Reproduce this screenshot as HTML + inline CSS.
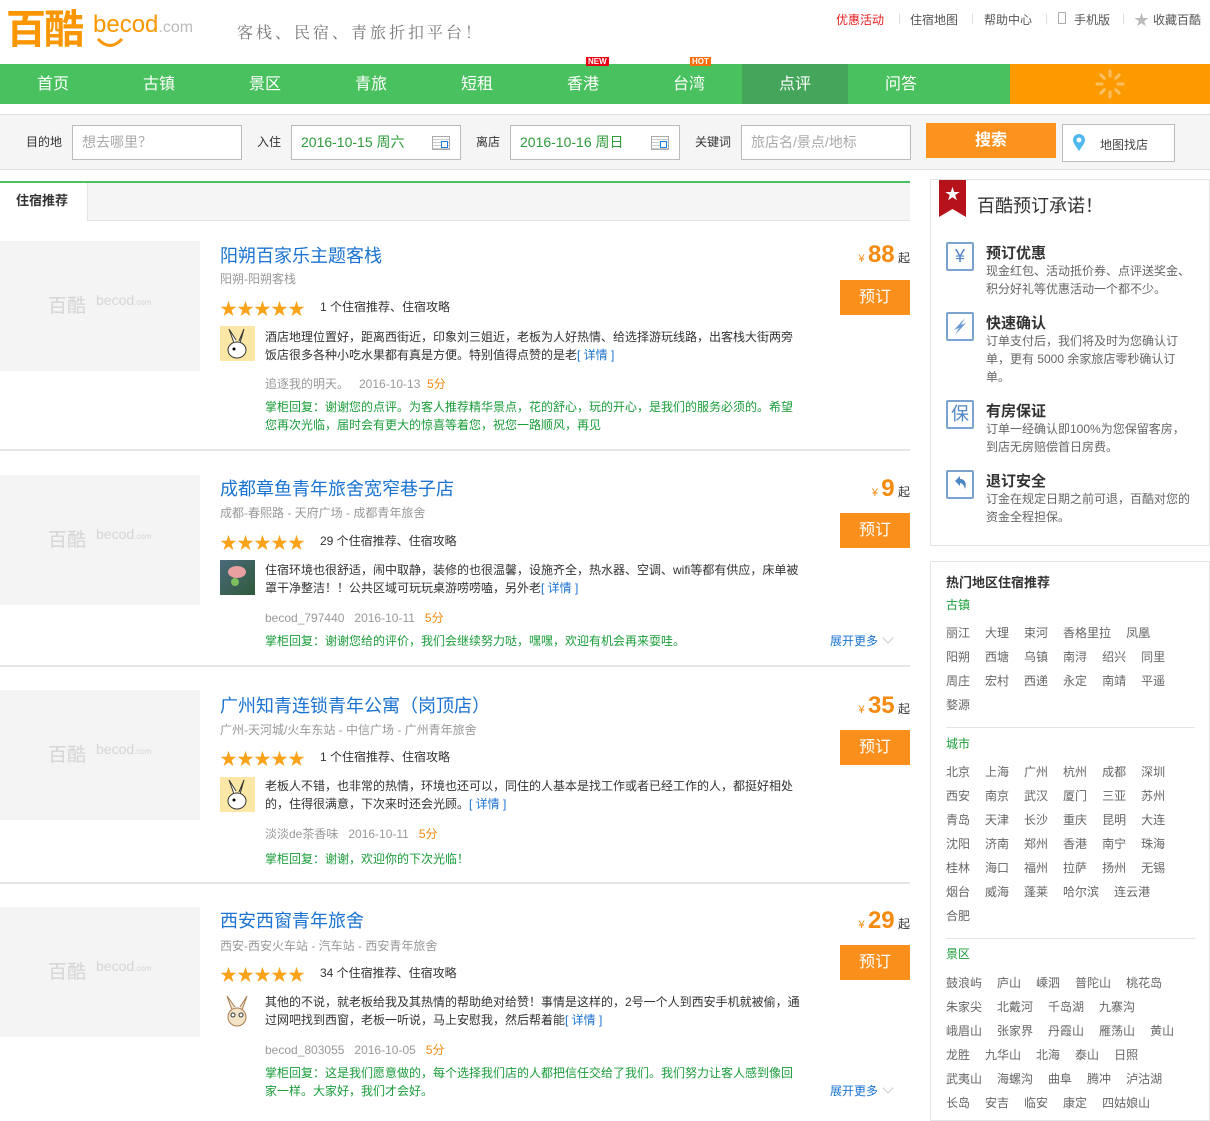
<!DOCTYPE html>
<html><head><meta charset="utf-8"><style>
*{margin:0;padding:0;box-sizing:border-box}
body{width:1210px;height:1100px;overflow:hidden;background:#fff;font-family:"Liberation Sans","Noto Sans CJK SC",sans-serif;font-size:12px;color:#333;position:relative}
.a{position:absolute;white-space:nowrap}
.nav{position:absolute;top:64px;left:0;width:1210px;height:40px;background:#49c15e}
.nav span{position:absolute;top:0;width:106px;height:40px;line-height:42px;text-align:center;color:#fff;font-size:16px}
.tag{position:absolute;font-size:8px;color:#fff;line-height:9px;padding:0 2px;font-weight:bold}
.sb{position:absolute;top:114px;left:0;width:1210px;height:56px;background:#f5f5f5;border-top:1px solid #ddd;border-bottom:1px solid #ddd}
.inp{position:absolute;top:10px;height:35px;background:#fff;border:1px solid #bbb;line-height:33px;padding-left:9px;font-size:14px;color:#aaa}
.lbl{position:absolute;top:18px;font-size:12px;color:#333}
.cal{position:absolute;right:10px;top:10px;width:18px;height:14px;border:1px solid #aaa;background:repeating-linear-gradient(#fff 0 2px,#ccc 2px 3px)}
.cal:after{content:"";position:absolute;right:1px;bottom:1px;width:5px;height:5px;border:1px solid #1a7de0;background:#fff}
.h{position:absolute;left:0;width:910px}
.img{position:absolute;left:0;top:0;width:200px;height:130px;background:#f4f4f4}
.img b{position:absolute;left:48px;top:50px;font-size:19px;color:#d5d5d5;font-weight:normal}
.img i{position:absolute;left:96px;top:51px;font-size:14px;color:#d5d5d5;font-style:normal}
.tt{position:absolute;left:220px;font-size:18px;color:#1a73d0;white-space:nowrap}
.sub{position:absolute;left:220px;color:#999;white-space:nowrap}
.st{position:absolute;left:220px;color:#f9a21a;font-size:17px;letter-spacing:0;white-space:nowrap}
.cnt{position:absolute;left:320px;color:#333;white-space:nowrap}
.av{position:absolute;left:220px;width:35px;height:35px}
.rv{position:absolute;left:265px;width:530px;line-height:18px;color:#333}
.rv a{color:#1a73d0;text-decoration:none}
.au{position:absolute;left:265px;color:#999;white-space:nowrap}
.au em{color:#f58a0f;font-style:normal}
.rp{position:absolute;left:265px;width:530px;line-height:18px;color:#1a9c3a}
.pr{position:absolute;right:0;color:#333;white-space:nowrap}
.pr span{color:#f58a0f;font-size:11px}
.pr b{color:#f58a0f;font-size:24px;font-weight:bold}
.bk{position:absolute;right:0;width:70px;height:35px;background:#fa8f1c;color:#fff;font-size:16px;text-align:center;line-height:35px}
.more{position:absolute;left:830px;color:#1a73d0;white-space:nowrap}
.more:after{content:"";display:inline-block;width:7px;height:7px;border-right:1px solid #ccc;border-bottom:1px solid #ccc;transform:rotate(45deg);margin-left:6px;position:relative;top:-3px}
.sep{position:absolute;left:0;width:910px;height:2px;background:#e5e5e5}
.box{position:absolute;left:930px;width:280px;border:1px solid #e5e5e5}
.pi{position:absolute;left:15px;width:28px;height:29px;border:2px solid #7aa3cf;border-radius:2px;color:#4f86c6;text-align:center;line-height:25px;font-size:18px}
.pt{position:absolute;left:55px;font-size:15px;font-weight:bold;color:#333}
.pd{position:absolute;left:55px;width:210px;line-height:18px;color:#666}
.g{color:#1a9c3a;font-size:12px;position:absolute;left:15px}
.row{position:absolute;left:15px;color:#666;white-space:nowrap;font-size:0}
.row span{display:inline-block;margin-right:15px;font-size:12px}
.hr{position:absolute;left:15px;width:249px;height:1px;background:#e5e5e5}
</style></head><body>

<div class="a" style="left:6px;top:8px;font-size:40px;color:#fb9600;font-weight:bold;letter-spacing:-2px;line-height:44px">百酷</div>
<div class="a" style="left:93px;top:10px;font-size:24px;color:#fb9600;line-height:30px">becod<span style="font-size:16px;color:#bbb">.com</span></div>
<svg class="a" style="left:95px;top:36px" width="30" height="14"><path d="M3 3 Q15 16 27 3" stroke="#fb9600" stroke-width="3" fill="none"/></svg>
<div class="a" style="left:237px;top:20px;font-size:16px;color:#777;letter-spacing:3px;font-family:'Liberation Serif','Noto Serif CJK SC',serif">客栈、民宿、青旅折扣平台！</div>

<div class="a" style="left:836px;top:11px;color:#e51c1c">优惠活动</div>
<div class="a" style="left:898px;top:11px;color:#ddd">|</div>
<div class="a" style="left:910px;top:11px;color:#555">住宿地图</div>
<div class="a" style="left:971px;top:11px;color:#ddd">|</div>
<div class="a" style="left:984px;top:11px;color:#555">帮助中心</div>
<div class="a" style="left:1045px;top:11px;color:#ddd">|</div>
<div class="a" style="left:1058px;top:12px;width:8px;height:12px;border:1px solid #aaa;border-radius:1px"></div>
<div class="a" style="left:1074px;top:11px;color:#555">手机版</div>
<div class="a" style="left:1122px;top:11px;color:#ddd">|</div>
<div class="a" style="left:1134px;top:9px;color:#bbb;font-size:15px">★</div>
<div class="a" style="left:1153px;top:11px;color:#555">收藏百酷</div>

<div class="nav">
<span style="left:0">首页</span><span style="left:106px">古镇</span><span style="left:212px">景区</span><span style="left:318px">青旅</span><span style="left:424px">短租</span><span style="left:530px">香港</span><span style="left:636px">台湾</span><span style="left:742px;background:#45a55a">点评</span><span style="left:848px">问答</span>
<div style="position:absolute;left:1010px;top:0;width:200px;height:40px;background:#fc9a00"></div>
<svg style="position:absolute;left:1094px;top:4px" width="32" height="32" viewBox="-16 -16 32 32"><g stroke="#fcc060" stroke-width="3" stroke-linecap="round"><line x1="0" y1="-8" x2="0" y2="-13"/><line x1="5.7" y1="-5.7" x2="9.2" y2="-9.2"/><line x1="8" y1="0" x2="13" y2="0"/><line x1="5.7" y1="5.7" x2="9.2" y2="9.2"/><line x1="0" y1="8" x2="0" y2="13"/><line x1="-5.7" y1="5.7" x2="-9.2" y2="9.2"/><line x1="-8" y1="0" x2="-13" y2="0"/><line x1="-5.7" y1="-5.7" x2="-9.2" y2="-9.2"/></g></svg>
</div>
<div class="tag" style="left:586px;top:57px;background:#e60012">NEW</div>
<div class="tag" style="left:690px;top:57px;background:#fb6c0b">HOT</div>

<div class="sb">
<div class="lbl" style="left:26px">目的地</div>
<div class="inp" style="left:72px;width:170px">想去哪里？</div>
<div class="lbl" style="left:257px">入住</div>
<div class="inp" style="left:291px;width:170px;color:#2d9b3a">2016-10-15 周六<div class="cal"></div></div>
<div class="lbl" style="left:476px">离店</div>
<div class="inp" style="left:510px;width:170px;color:#2d9b3a">2016-10-16 周日<div class="cal"></div></div>
<div class="lbl" style="left:695px">关键词</div>
<div class="inp" style="left:741px;width:170px">旅店名/景点/地标</div>
<div style="position:absolute;left:926px;top:8px;width:130px;height:35px;background:#fc931e;color:#fff;font-size:16px;font-weight:bold;text-align:center;line-height:35px">搜索</div>
<div style="position:absolute;left:1062px;top:9px;width:113px;height:38px;border:1px solid #bbb;background:#fff">
<svg style="position:absolute;left:9px;top:8px" width="14" height="19"><path d="M7 18 C2 11 1 9 1 7 A6 6 0 0 1 13 7 C13 9 12 11 7 18Z" fill="#4fb8ee"/><circle cx="7" cy="7" r="2.5" fill="#fff"/></svg>
<div style="position:absolute;left:37px;top:11px;color:#444">地图找店</div></div>
</div>

<div class="a" style="left:0;top:181px;width:910px;height:40px;background:#f5f5f5;border-top:2px solid #49c15e;border-bottom:1px solid #e5e5e5"></div>
<div class="a" style="left:0;top:183px;width:88px;height:38px;background:#fff;border-right:1px solid #e5e5e5;font-weight:bold;font-size:13px;line-height:36px;padding-left:16px">住宿推荐</div>

<!-- hotel 1 -->
<div class="h" style="top:241px;height:210px">
<div class="img"><b>百酷</b><i>becod<small style="font-size:8px">.com</small></i></div>
<div class="tt" style="top:1px">阳朔百家乐主题客栈</div>
<div class="sub" style="top:29px">阳朔-阳朔客栈</div>
<div class="st" style="top:54px">★★★★★</div>
<div class="cnt" style="top:57px">1 个住宿推荐、住宿攻略</div>
<div class="av" style="top:85px;background:#fde7a6"><svg width="35" height="35"><ellipse cx="17" cy="24" rx="9" ry="8" fill="#fff" stroke="#333"/><path d="M14 17 L9 3 L16 14 M20 17 L24 3 L19 15" stroke="#333" fill="#fff"/><circle cx="14" cy="23" r="1.5"/></svg></div>
<div class="rv" style="top:87px">酒店地理位置好，距离西街近，印象刘三姐近，老板为人好热情、给选择游玩线路，出客栈大街两旁饭店很多各种小吃水果都有真是方便。特别值得点赞的是老<a>[ 详情 ]</a></div>
<div class="au" style="top:134px">追逐我的明天。&nbsp;&nbsp;&nbsp;2016-10-13&nbsp;&nbsp;<em>5分</em></div>
<div class="rp" style="top:157px">掌柜回复：谢谢您的点评。为客人推荐精华景点，花的舒心，玩的开心，是我们的服务必须的。希望您再次光临，届时会有更大的惊喜等着您，祝您一路顺风，再见</div>
<div class="pr" style="top:0"><span>¥</span> <b>88</b> 起</div>
<div class="bk" style="top:39px">预订</div>
</div>
<div class="sep" style="top:449px"></div>

<!-- hotel 2 -->
<div class="h" style="top:475px;height:190px">
<div class="img"><b>百酷</b><i>becod<small style="font-size:8px">.com</small></i></div>
<div class="tt" style="top:0">成都章鱼青年旅舍宽窄巷子店</div>
<div class="sub" style="top:29px">成都-春熙路 - 天府广场 - 成都青年旅舍</div>
<div class="st" style="top:54px">★★★★★</div>
<div class="cnt" style="top:57px">29 个住宿推荐、住宿攻略</div>
<div class="av" style="top:85px;background:linear-gradient(135deg,#4a6a7a,#2f5a3a)"><svg width="35" height="35"><ellipse cx="17" cy="12" rx="9" ry="6" fill="#e8a0a0"/><circle cx="15" cy="22" r="4" fill="#7fbf5f"/></svg></div>
<div class="rv" style="top:86px;width:545px">住宿环境也很舒适，闹中取静，装修的也很温馨，设施齐全，热水器、空调、wifi等都有供应，床单被罩干净整洁！！公共区域可玩玩桌游唠唠嗑，另外老<a>[ 详情 ]</a></div>
<div class="au" style="top:134px">becod_797440&nbsp;&nbsp;&nbsp;2016-10-11&nbsp;&nbsp;&nbsp;<em>5分</em></div>
<div class="rp" style="top:157px">掌柜回复：谢谢您给的评价，我们会继续努力哒，嘿嘿，欢迎有机会再来耍哇。</div>
<div class="more" style="top:157px">展开更多</div>
<div class="pr" style="top:0"><span>¥</span> <b>9</b> 起</div>
<div class="bk" style="top:38px">预订</div>
</div>
<div class="sep" style="top:665px"></div>

<!-- hotel 3 -->
<div class="h" style="top:690px;height:190px">
<div class="img"><b>百酷</b><i>becod<small style="font-size:8px">.com</small></i></div>
<div class="tt" style="top:2px">广州知青连锁青年公寓（岗顶店）</div>
<div class="sub" style="top:31px">广州-天河城/火车东站 - 中信广场 - 广州青年旅舍</div>
<div class="st" style="top:55px">★★★★★</div>
<div class="cnt" style="top:58px">1 个住宿推荐、住宿攻略</div>
<div class="av" style="top:87px;background:#fde7a6"><svg width="35" height="35"><ellipse cx="17" cy="24" rx="9" ry="8" fill="#fff" stroke="#333"/><path d="M14 17 L9 3 L16 14 M20 17 L24 3 L19 15" stroke="#333" fill="#fff"/><circle cx="14" cy="23" r="1.5"/></svg></div>
<div class="rv" style="top:87px">老板人不错，也非常的热情，环境也还可以，同住的人基本是找工作或者已经工作的人，都挺好相处的，住得很满意，下次来时还会光顾。<a>[ 详情 ]</a></div>
<div class="au" style="top:135px">淡淡de茶香味&nbsp;&nbsp;&nbsp;2016-10-11&nbsp;&nbsp;&nbsp;<em>5分</em></div>
<div class="rp" style="top:160px">掌柜回复：谢谢，欢迎你的下次光临！</div>
<div class="pr" style="top:2px"><span>¥</span> <b>35</b> 起</div>
<div class="bk" style="top:40px">预订</div>
</div>
<div class="sep" style="top:882px"></div>

<!-- hotel 4 -->
<div class="h" style="top:907px;height:200px">
<div class="img"><b>百酷</b><i>becod<small style="font-size:8px">.com</small></i></div>
<div class="tt" style="top:0">西安西窗青年旅舍</div>
<div class="sub" style="top:30px">西安-西安火车站 - 汽车站 - 西安青年旅舍</div>
<div class="st" style="top:54px">★★★★★</div>
<div class="cnt" style="top:57px">34 个住宿推荐、住宿攻略</div>
<div class="av" style="top:87px"><svg width="35" height="35"><path d="M12 16 L7 2 L15 13 M22 16 L27 2 L20 13" stroke="#a87a50" fill="#f3e4c8"/><ellipse cx="17" cy="23" rx="9" ry="9" fill="#f3e4c8" stroke="#a87a50"/><circle cx="13" cy="21" r="2" fill="#fff" stroke="#333"/><circle cx="21" cy="21" r="2" fill="#fff" stroke="#333"/></svg></div>
<div class="rv" style="top:86px;width:545px">其他的不说，就老板给我及其热情的帮助绝对给赞！事情是这样的，2号一个人到西安手机就被偷，通过网吧找到西窗，老板一听说，马上安慰我，然后帮着能<a>[ 详情 ]</a></div>
<div class="au" style="top:134px">becod_803055&nbsp;&nbsp;&nbsp;2016-10-05&nbsp;&nbsp;&nbsp;<em>5分</em></div>
<div class="rp" style="top:157px">掌柜回复：这是我们愿意做的，每个选择我们店的人都把信任交给了我们。我们努力让客人感到像回家一样。大家好，我们才会好。</div>
<div class="more" style="top:175px">展开更多</div>
<div class="pr" style="top:0"><span>¥</span> <b>29</b> 起</div>
<div class="bk" style="top:38px">预订</div>
</div>

<!-- sidebar box 1 -->
<div class="box" style="top:179px;height:367px">
<svg style="position:absolute;left:8px;top:0" width="27" height="37"><path d="M0 0H27V37L13.5 29L0 37Z" fill="#b5121b"/><text x="13.5" y="19" text-anchor="middle" fill="#fff" font-size="15">★</text></svg>
<div style="position:absolute;left:46px;top:12px;font-size:18px;color:#333">百酷预订承诺！</div>
<div class="pi" style="top:62px">¥</div>
<div class="pt" style="top:62px">预订优惠</div>
<div class="pd" style="top:82px">现金红包、活动抵价券、点评送奖金、积分好礼等优惠活动一个都不少。</div>
<div class="pi" style="top:132px"><svg width="24" height="24"><path d="M17 4 L6 16 L11 14 L7 21 L18 9 L13 11Z" fill="#6a9bd2"/></svg></div>
<div class="pt" style="top:132px">快速确认</div>
<div class="pd" style="top:152px">订单支付后，我们将及时为您确认订单，更有 5000 余家旅店零秒确认订单。</div>
<div class="pi" style="top:220px">保</div>
<div class="pt" style="top:220px">有房保证</div>
<div class="pd" style="top:240px">订单一经确认即100%为您保留客房，到店无房赔偿首日房费。</div>
<div class="pi" style="top:290px"><svg width="24" height="24"><path d="M7 9 L12 4 L12 7 C17 7 19 11 17 17 C16 13 14 11 12 11 L12 14Z" fill="#4f86c6"/></svg></div>
<div class="pt" style="top:290px">退订安全</div>
<div class="pd" style="top:310px">订金在规定日期之前可退，百酷对您的资金全程担保。</div>
</div>

<!-- sidebar box 2 -->
<div class="box" style="top:561px;height:560px">
<div style="position:absolute;left:15px;top:10px;font-size:13px;font-weight:bold;color:#333">热门地区住宿推荐</div>
<div class="g" style="top:34px">古镇</div>
<div class="row" style="top:62px"><span>丽江</span><span>大理</span><span>束河</span><span>香格里拉</span><span>凤凰</span></div>
<div class="row" style="top:86px"><span>阳朔</span><span>西塘</span><span>乌镇</span><span>南浔</span><span>绍兴</span><span>同里</span></div>
<div class="row" style="top:110px"><span>周庄</span><span>宏村</span><span>西递</span><span>永定</span><span>南靖</span><span>平遥</span></div>
<div class="row" style="top:134px"><span>婺源</span></div>
<div class="hr" style="top:165px"></div>
<div class="g" style="top:173px">城市</div>
<div class="row" style="top:201px"><span>北京</span><span>上海</span><span>广州</span><span>杭州</span><span>成都</span><span>深圳</span></div>
<div class="row" style="top:225px"><span>西安</span><span>南京</span><span>武汉</span><span>厦门</span><span>三亚</span><span>苏州</span></div>
<div class="row" style="top:249px"><span>青岛</span><span>天津</span><span>长沙</span><span>重庆</span><span>昆明</span><span>大连</span></div>
<div class="row" style="top:273px"><span>沈阳</span><span>济南</span><span>郑州</span><span>香港</span><span>南宁</span><span>珠海</span></div>
<div class="row" style="top:297px"><span>桂林</span><span>海口</span><span>福州</span><span>拉萨</span><span>扬州</span><span>无锡</span></div>
<div class="row" style="top:321px"><span>烟台</span><span>威海</span><span>蓬莱</span><span>哈尔滨</span><span>连云港</span></div>
<div class="row" style="top:345px"><span>合肥</span></div>
<div class="hr" style="top:376px"></div>
<div class="g" style="top:383px">景区</div>
<div class="row" style="top:412px"><span>鼓浪屿</span><span>庐山</span><span>嵊泗</span><span>普陀山</span><span>桃花岛</span></div>
<div class="row" style="top:436px"><span>朱家尖</span><span>北戴河</span><span>千岛湖</span><span>九寨沟</span></div>
<div class="row" style="top:460px"><span>峨眉山</span><span>张家界</span><span>丹霞山</span><span>雁荡山</span><span>黄山</span></div>
<div class="row" style="top:484px"><span>龙胜</span><span>九华山</span><span>北海</span><span>泰山</span><span>日照</span></div>
<div class="row" style="top:508px"><span>武夷山</span><span>海螺沟</span><span>曲阜</span><span>腾冲</span><span>泸沽湖</span></div>
<div class="row" style="top:532px"><span>长岛</span><span>安吉</span><span>临安</span><span>康定</span><span>四姑娘山</span></div>
</div>
</body></html>
